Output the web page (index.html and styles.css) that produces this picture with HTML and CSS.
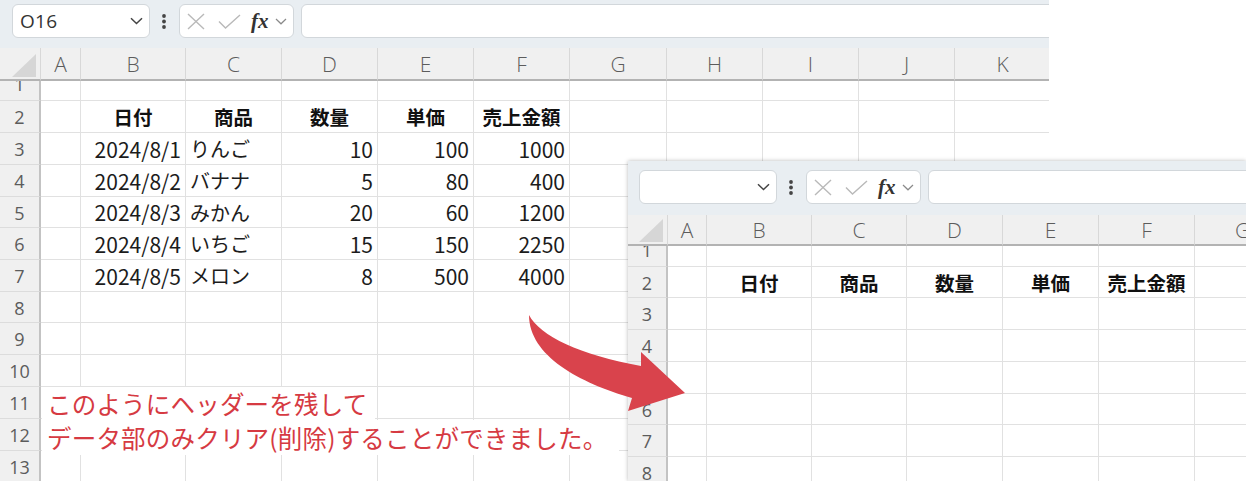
FILE: index.html
```html
<!DOCTYPE html>
<html lang="ja">
<head>
<meta charset="utf-8">
<title>Excel clear data</title>
<link rel="stylesheet" href="styles.css">
</head>
<body>
<div class="desk">
  <section class="win win-main">
    <div class="toolbar">
      <div class="namebox"><span class="name">O16</span><svg class="chev" width="13" height="8" viewBox="0 0 13 8"><path d="M1 1.2 L6.5 6.5 L12 1.2" fill="none" stroke="#444" stroke-width="1.5"/></svg></div>
      <svg class="dots" width="4" height="34" viewBox="0 0 4 34"><circle cx="2" cy="12" r="1.9" fill="#454545"/><circle cx="2" cy="17.5" r="1.9" fill="#454545"/><circle cx="2" cy="23" r="1.9" fill="#454545"/></svg>
      <div class="fxbox">
        <svg class="ico-x" width="18" height="17" viewBox="0 0 18 17"><path d="M1 1 L17 16 M17 1 L1 16" fill="none" stroke="#b9b9b9" stroke-width="1.4"/></svg>
        <svg class="ico-ok" width="23" height="15" viewBox="0 0 23 15"><path d="M1 7.5 L7.5 14 L22 1" fill="none" stroke="#b9b9b9" stroke-width="1.4"/></svg>
        <span class="fx">fx</span>
        <svg class="chev-sm" width="12" height="7" viewBox="0 0 12 7"><path d="M1 1 L6 5.8 L11 1" fill="none" stroke="#8a8a8a" stroke-width="1.2"/></svg>
      </div>
      <div class="formula"></div>
    </div>
    <div class="sheet sheet-main">
      <div class="row">
        <div class="ch corner"><svg width="24" height="23" viewBox="0 0 24 23"><path d="M24 0 L24 23 L0 23 Z" fill="#d6d6d6"/></svg></div>
        <div class="ch">A</div><div class="ch">B</div><div class="ch">C</div><div class="ch">D</div><div class="ch">E</div><div class="ch">F</div><div class="ch">G</div><div class="ch">H</div><div class="ch">I</div><div class="ch">J</div><div class="ch">K</div>
      </div>
      <div class="row">
        <div class="rh clip"><span>1</span></div>
        <div class="cell"></div><div class="cell"></div><div class="cell"></div><div class="cell"></div><div class="cell"></div><div class="cell"></div><div class="cell"></div><div class="cell"></div><div class="cell"></div><div class="cell"></div><div class="cell"></div>
      </div>
      <div class="row">
        <div class="rh">2</div>
        <div class="cell"></div><div class="cell hd">日付</div><div class="cell hd">商品</div><div class="cell hd">数量</div><div class="cell hd">単価</div><div class="cell hd">売上金額</div><div class="cell"></div><div class="cell"></div><div class="cell"></div><div class="cell"></div><div class="cell"></div>
      </div>
      <div class="row">
        <div class="rh">3</div>
        <div class="cell"></div><div class="cell num">2024/8/1</div><div class="cell txt">りんご</div><div class="cell num">10</div><div class="cell num">100</div><div class="cell num">1000</div><div class="cell"></div><div class="cell"></div><div class="cell"></div><div class="cell"></div><div class="cell"></div>
      </div>
      <div class="row">
        <div class="rh">4</div>
        <div class="cell"></div><div class="cell num">2024/8/2</div><div class="cell txt">バナナ</div><div class="cell num">5</div><div class="cell num">80</div><div class="cell num">400</div><div class="cell"></div><div class="cell"></div><div class="cell"></div><div class="cell"></div><div class="cell"></div>
      </div>
      <div class="row">
        <div class="rh">5</div>
        <div class="cell"></div><div class="cell num">2024/8/3</div><div class="cell txt">みかん</div><div class="cell num">20</div><div class="cell num">60</div><div class="cell num">1200</div><div class="cell"></div><div class="cell"></div><div class="cell"></div><div class="cell"></div><div class="cell"></div>
      </div>
      <div class="row">
        <div class="rh">6</div>
        <div class="cell"></div><div class="cell num">2024/8/4</div><div class="cell txt">いちご</div><div class="cell num">15</div><div class="cell num">150</div><div class="cell num">2250</div><div class="cell"></div><div class="cell"></div><div class="cell"></div><div class="cell"></div><div class="cell"></div>
      </div>
      <div class="row">
        <div class="rh">7</div>
        <div class="cell"></div><div class="cell num">2024/8/5</div><div class="cell txt">メロン</div><div class="cell num">8</div><div class="cell num">500</div><div class="cell num">4000</div><div class="cell"></div><div class="cell"></div><div class="cell"></div><div class="cell"></div><div class="cell"></div>
      </div>
      <div class="row">
        <div class="rh">8</div>
        <div class="cell"></div><div class="cell"></div><div class="cell"></div><div class="cell"></div><div class="cell"></div><div class="cell"></div><div class="cell"></div><div class="cell"></div><div class="cell"></div><div class="cell"></div><div class="cell"></div>
      </div>
      <div class="row">
        <div class="rh">9</div>
        <div class="cell"></div><div class="cell"></div><div class="cell"></div><div class="cell"></div><div class="cell"></div><div class="cell"></div><div class="cell"></div><div class="cell"></div><div class="cell"></div><div class="cell"></div><div class="cell"></div>
      </div>
      <div class="row">
        <div class="rh">10</div>
        <div class="cell"></div><div class="cell"></div><div class="cell"></div><div class="cell"></div><div class="cell"></div><div class="cell"></div><div class="cell"></div><div class="cell"></div><div class="cell"></div><div class="cell"></div><div class="cell"></div>
      </div>
      <div class="row">
        <div class="rh">11</div>
        <div class="cell"></div><div class="cell"></div><div class="cell"></div><div class="cell"></div><div class="cell"></div><div class="cell"></div><div class="cell"></div><div class="cell"></div><div class="cell"></div><div class="cell"></div><div class="cell"></div>
      </div>
      <div class="row">
        <div class="rh">12</div>
        <div class="cell"></div><div class="cell"></div><div class="cell"></div><div class="cell"></div><div class="cell"></div><div class="cell"></div><div class="cell"></div><div class="cell"></div><div class="cell"></div><div class="cell"></div><div class="cell"></div>
      </div>
      <div class="row">
        <div class="rh">13</div>
        <div class="cell"></div><div class="cell"></div><div class="cell"></div><div class="cell"></div><div class="cell"></div><div class="cell"></div><div class="cell"></div><div class="cell"></div><div class="cell"></div><div class="cell"></div><div class="cell"></div>
      </div>
    </div>
    <div class="note">
      <span class="note-line">このようにヘッダーを残して</span>
      <span class="note-line note-line-2">データ部のみクリア(削除)することができました。</span>
    </div>
  </section>

  <section class="win win-sub">
    <div class="toolbar">
      <div class="namebox"><span class="name"></span><svg class="chev" width="13" height="8" viewBox="0 0 13 8"><path d="M1 1.2 L6.5 6.5 L12 1.2" fill="none" stroke="#444" stroke-width="1.5"/></svg></div>
      <svg class="dots" width="4" height="34" viewBox="0 0 4 34"><circle cx="2" cy="12" r="1.9" fill="#454545"/><circle cx="2" cy="17.5" r="1.9" fill="#454545"/><circle cx="2" cy="23" r="1.9" fill="#454545"/></svg>
      <div class="fxbox">
        <svg class="ico-x" width="18" height="17" viewBox="0 0 18 17"><path d="M1 1 L17 16 M17 1 L1 16" fill="none" stroke="#b9b9b9" stroke-width="1.4"/></svg>
        <svg class="ico-ok" width="23" height="15" viewBox="0 0 23 15"><path d="M1 7.5 L7.5 14 L22 1" fill="none" stroke="#b9b9b9" stroke-width="1.4"/></svg>
        <span class="fx">fx</span>
        <svg class="chev-sm" width="12" height="7" viewBox="0 0 12 7"><path d="M1 1 L6 5.8 L11 1" fill="none" stroke="#8a8a8a" stroke-width="1.2"/></svg>
      </div>
      <div class="formula"></div>
    </div>
    <div class="sheet sheet-sub">
      <div class="row">
        <div class="ch corner"><svg width="24" height="23" viewBox="0 0 24 23"><path d="M24 0 L24 23 L0 23 Z" fill="#d6d6d6"/></svg></div>
        <div class="ch">A</div><div class="ch">B</div><div class="ch">C</div><div class="ch">D</div><div class="ch">E</div><div class="ch">F</div><div class="ch">G</div>
      </div>
      <div class="row">
        <div class="rh clip"><span>1</span></div>
        <div class="cell"></div><div class="cell"></div><div class="cell"></div><div class="cell"></div><div class="cell"></div><div class="cell"></div><div class="cell"></div>
      </div>
      <div class="row">
        <div class="rh">2</div>
        <div class="cell"></div><div class="cell hd">日付</div><div class="cell hd">商品</div><div class="cell hd">数量</div><div class="cell hd">単価</div><div class="cell hd">売上金額</div><div class="cell"></div>
      </div>
      <div class="row">
        <div class="rh">3</div>
        <div class="cell"></div><div class="cell"></div><div class="cell"></div><div class="cell"></div><div class="cell"></div><div class="cell"></div><div class="cell"></div>
      </div>
      <div class="row">
        <div class="rh">4</div>
        <div class="cell"></div><div class="cell"></div><div class="cell"></div><div class="cell"></div><div class="cell"></div><div class="cell"></div><div class="cell"></div>
      </div>
      <div class="row">
        <div class="rh">5</div>
        <div class="cell"></div><div class="cell"></div><div class="cell"></div><div class="cell"></div><div class="cell"></div><div class="cell"></div><div class="cell"></div>
      </div>
      <div class="row">
        <div class="rh">6</div>
        <div class="cell"></div><div class="cell"></div><div class="cell"></div><div class="cell"></div><div class="cell"></div><div class="cell"></div><div class="cell"></div>
      </div>
      <div class="row">
        <div class="rh">7</div>
        <div class="cell"></div><div class="cell"></div><div class="cell"></div><div class="cell"></div><div class="cell"></div><div class="cell"></div><div class="cell"></div>
      </div>
      <div class="row">
        <div class="rh">8</div>
        <div class="cell"></div><div class="cell"></div><div class="cell"></div><div class="cell"></div><div class="cell"></div><div class="cell"></div><div class="cell"></div>
      </div>
    </div>
  </section>

  <svg class="arrow" width="1246" height="481" viewBox="0 0 1246 481">
    <path d="M529 315 C540 336 580 355 641 366 L641 352 L685 393 L628 411 L632 398 C580 383 529 356 529 315 Z" fill="#d9434c"/>
  </svg>
</div>
</body>
</html>
```

FILE: styles.css
```css
* { box-sizing: border-box; margin: 0; padding: 0; }
html, body { width: 1246px; height: 481px; overflow: hidden; background: #fff; }
body { font-family: "Noto Sans CJK JP", "Noto Sans", sans-serif; color: #1c1c1c; }

.desk { position: relative; width: 1246px; height: 481px; }

.win { position: absolute; overflow: hidden; background: #fff; }
.win-main { left: 0; top: 0; width: 1049px; height: 481px; }
.win-sub { left: 628px; top: 161px; width: 618px; height: 320px; box-shadow: 0 0 4px rgba(0, 0, 0, 0.28); z-index: 2; }

/* toolbar */
.toolbar { display: flex; align-items: flex-start; height: 48px; padding: 4px 0 0 12px; background: #e9eef2; }
.win-sub .toolbar { height: 54px; padding: 9px 0 0 11px; }

.namebox { display: flex; align-items: center; justify-content: space-between; width: 138px; height: 34px; padding: 0 6px 0 7px; background: #fff; border: 1px solid #d2d7db; border-radius: 6px; }
.name { font-family: "Open Sans", sans-serif; font-size: 19px; color: #333; letter-spacing: 0.3px; }
.dots { margin-left: 12px; flex: none; }

.fxbox { display: flex; align-items: center; width: 115px; height: 34px; margin-left: 13px; padding-left: 7px; background: #fff; border: 1px solid #d2d7db; border-radius: 6px; }
.ico-ok { margin-left: 13px; }
.fx { margin-left: 10px; font-family: "Liberation Serif", serif; font-style: italic; font-weight: bold; font-size: 21px; line-height: 1; color: #333; }
.chev-sm { margin-left: 6px; }

.formula { flex: 1; height: 34px; margin-left: 7px; margin-right: -12px; background: #fff; border: 1px solid #d2d7db; border-radius: 6px; }

/* sheet grid */
.sheet { display: grid; }
.sheet-main {
  grid-template-columns: 41px 40px 105px 96px 96px 96px 96px 97px 96px 96px 96px 96px;
  grid-template-rows: 33px 20px 32px 32px 32px 31px 32px 32px 31px 32px 32px 32px 32px 32px;
}
.sheet-sub {
  grid-template-columns: 40px 39px 105px 95px 96px 96px 96px 96px;
  grid-template-rows: 31px 21px 31px 32px 32px 32px 31px 32px 32px;
}
.row { display: contents; }

.cell { display: flex; align-items: center; padding: 0 4px; border-right: 1px solid #e1e1e1; border-bottom: 1px solid #e1e1e1; font-size: 20px; white-space: nowrap; overflow: hidden; }
.num { justify-content: flex-end; font-size: 21px; }
.txt { justify-content: flex-start; }
.hd { justify-content: center; font-weight: bold; font-size: 19.5px; color: #111; }

.ch { display: flex; align-items: center; justify-content: center; background: #f0f0f0; border-right: 1px solid #d8d8d8; border-bottom: 2px solid #b3b3b3; font-family: "Open Sans", sans-serif; font-weight: 300; font-size: 21px; color: #5c5c5c; }
.corner { align-items: flex-end; justify-content: flex-end; padding: 0 4px 2px 0; }

.rh { display: flex; align-items: center; justify-content: center; overflow: hidden; background: #f0f0f0; border-right: 2px solid #c3c3c3; border-bottom: 1px solid #dcdcdc; font-family: "Open Sans", sans-serif; font-size: 18px; color: #5c5c5c; padding-top: 1px; }
.clip { align-items: flex-end; padding-top: 0; }
.clip span { line-height: 31px; }

/* note overlay */
.note { position: absolute; left: 42px; top: 387px; display: flex; flex-direction: column; align-items: flex-start; z-index: 1; }
.note-line { display: block; height: 33px; padding: 0 8px 0 5px; background: #fff; color: #d63a42; font-size: 24.5px; line-height: 33px; letter-spacing: 0.2px; white-space: nowrap; }
.note-line-2 { height: 35px; line-height: 35px; padding-right: 12px; }

/* arrow */
.arrow { position: absolute; left: 0; top: 0; z-index: 3; pointer-events: none; }
```
